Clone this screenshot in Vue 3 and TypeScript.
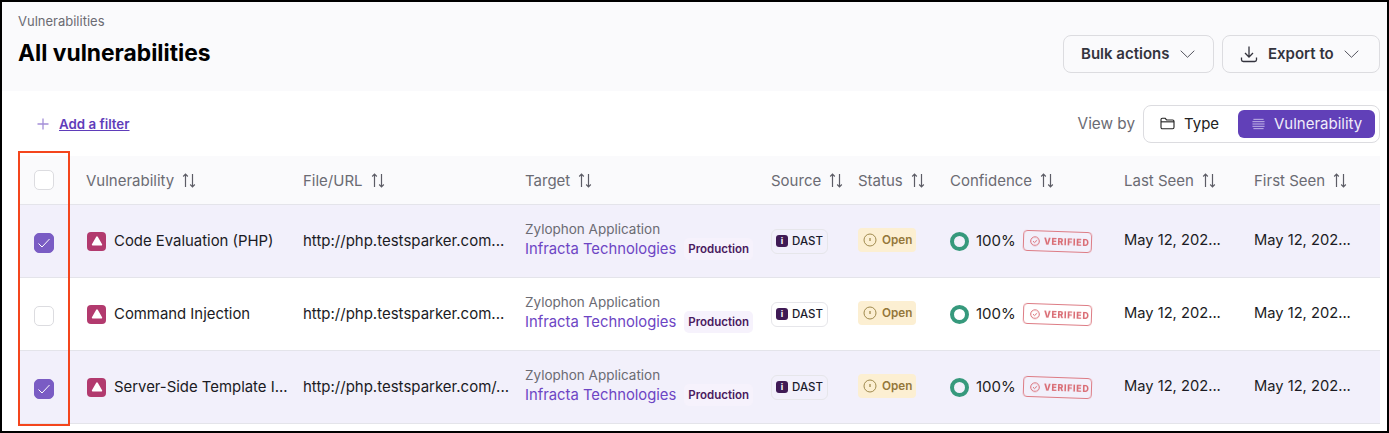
<script setup lang="ts">
interface Row { name: string; url: string; checked: boolean }
const rows: Row[] = [
  { name: 'Code Evaluation (PHP)', url: 'http://php.testsparker.com...', checked: true },
  { name: 'Command Injection', url: 'http://php.testsparker.com...', checked: false },
  { name: 'Server-Side Template I...', url: 'http://php.testsparker.com/...', checked: true },
]
const columns = ['Vulnerability', 'File/URL', 'Target', 'Source', 'Status', 'Confidence', 'Last Seen', 'First Seen']
</script>

<template>
  <div class="page">
    <svg class="defs" width="0" height="0" aria-hidden="true">
      <filter id="rough" x="-5%" y="-10%" width="110%" height="120%">
        <feTurbulence type="fractalNoise" baseFrequency="0.9" numOctaves="2" seed="4" result="n" />
        <feDisplacementMap in="SourceGraphic" in2="n" scale="1" />
      </filter>
    </svg>
    <header class="top">
      <div>
        <div class="crumb">Vulnerabilities</div>
        <h1 class="title">All vulnerabilities</h1>
      </div>
      <div class="actions">
        <button class="btn bulk">Bulk actions
          <svg viewBox="0 0 15 8" width="15" height="8"><path d="M.7.7l6.800 6.600L14.300.7" fill="none" stroke="#55555f" stroke-width="1"/></svg>
        </button>
        <button class="btn export">
          <svg viewBox="0 0 18 18" width="18" height="18" fill="none" stroke="#33333d" stroke-width="1.300"><path d="M9 1.500v10M5 8l4 4 4-4M1.500 12.500v2.200c0 1 .7 1.800 1.800 1.800h11.400c1.100 0 1.800-.8 1.800-1.800v-2.200"/></svg>
          <span>Export to</span>
          <svg viewBox="0 0 15 8" width="15" height="8"><path d="M.7.7l6.800 6.600L14.300.7" fill="none" stroke="#55555f" stroke-width="1"/></svg>
        </button>
      </div>
    </header>

    <div class="filters">
      <div class="filter">
        <svg viewBox="0 0 12 12" width="12" height="12"><path d="M6 .5v11M.5 6h11" stroke="#a48fd8" stroke-width="1.300"/></svg>
        <a class="add">Add a filter</a>
      </div>
      <div class="view">
        <span class="view-label">View by</span>
        <div class="seg">
          <span class="seg-item">
            <svg viewBox="0 0 16 14" width="15" height="13" fill="none" stroke="#222" stroke-width="1.200"><path d="M1 3c0-1 .6-1.600 1.500-1.600h3l1.500 1.800h6.500c.9 0 1.500.6 1.500 1.500V11c0 1-.6 1.600-1.500 1.600h-11C1.600 12.600 1 12 1 11z"/><path d="M1 5.200h14"/></svg>
            Type
          </span>
          <span class="seg-item active">
            <svg viewBox="0 0 14 12" width="13" height="12" stroke="#c9bdea" stroke-width="1"><path d="M1.500 1h11M.5 3.500h13M.5 6h13M.5 8.500h13M1.500 11h11"/></svg>
            Vulnerability
          </span>
        </div>
      </div>
    </div>

    <div class="table">
      <div class="row head">
        <div class="cell-check"><span class="box"></span></div>
        <div v-for="c in columns" :key="c" class="th">
          {{ c }}
          <svg viewBox="0 0 14 15" width="14" height="15" fill="none" stroke="#5c5c66" stroke-width="1.200"><path d="M3.500 14V1.200M1.200 3.500l2.300-2.300 2.300 2.300M10.500 1v12.800M8.200 11.500l2.300 2.300 2.300-2.300"/></svg>
        </div>
      </div>
      <div v-for="r in rows" :key="r.name" class="row" :class="{ selected: r.checked }">
        <div class="cell-check body">
          <span class="box" :class="{ on: r.checked }">
            <svg v-if="r.checked" viewBox="0 0 14 12" width="14" height="12"><path d="M1.500 6.500l3.500 3.500 7.500-8" fill="none" stroke="#fff" stroke-width="1"/></svg>
          </span>
        </div>
        <div class="td name">
          <span class="sev"><svg viewBox="0 0 12 10" width="12" height="10"><path d="M6 1.300L10.300 8.600H1.700z" fill="#fff" stroke="#fff" stroke-width="1.800" stroke-linejoin="round"/></svg></span>
          <span class="name-text">{{ r.name }}</span>
        </div>
        <div class="td"><span class="line">{{ r.url }}</span></div>
        <div class="td target">
          <div class="app">Zylophon Application</div>
          <div class="org"><span class="org-name">Infracta Technologies</span><span class="env">Production</span></div>
        </div>
        <div class="td"><span class="src"><span class="src-i">i</span>DAST</span></div>
        <div class="td status-cell"><span class="status">
          <svg viewBox="0 0 14 14" width="14" height="14" fill="none" stroke="#a08a4e" stroke-width="1"><circle cx="7" cy="7" r="6"/><path d="M7 5v3" stroke-width="1.300"/></svg>
          Open</span></div>
        <div class="td conf">
          <span class="ring"></span>
          <span class="pct">100%</span>
          <span class="stamp">
            <svg viewBox="0 0 10 10" width="10" height="10" fill="none" stroke="#d96a72" stroke-width="1"><circle cx="5" cy="5" r="4.300"/><path d="M3 5l1.500 1.500L7 3.800"/></svg>
            VERIFIED
          </span>
        </div>
        <div class="td"><span class="line date">May 12, 202...</span></div>
        <div class="td"><span class="line date">May 12, 202...</span></div>
      </div>
    </div>

    <div class="highlight"></div>
  </div>
</template>

<style>
html, body { margin: 0; background: #fff; }
</style>

<style scoped>
.page {
  position: relative;
  width: 1389px;
  height: 433px;
  box-sizing: border-box;
  border: 2px solid #000;
  overflow: hidden;
  background: #fff;
  font-family: Inter, "Noto Sans", sans-serif;
  color: #1b1b24;
}
.defs { position: absolute; }
.top {
  height: 89px;
  background: #fafafc;
  display: flex;
  justify-content: space-between;
  padding: 11px 7px 0 16px;
  box-sizing: border-box;
}
.crumb { font-size: 13px; line-height: 16px; color: #6b6b73; }
.title { margin: 10px 0 0; font-size: 22.8px; line-height: 28px; font-weight: 700; color: #000; }
.actions { display: flex; gap: 8px; padding-top: 22px; align-items: flex-start; }
.btn {
  height: 38px;
  box-sizing: border-box;
  border: 1px solid #dcdce0;
  border-radius: 8px;
  background: #fafafc;
  display: flex;
  align-items: center;
  font: 600 15px Inter, sans-serif;
  color: #33333d;
  padding: 0 0 2px;
}
.btn svg { flex: none; margin-top: 2px; }
.bulk { width: 151px; padding-left: 17px; gap: 11px; }
.export { width: 158px; padding-left: 17px; gap: 10px; }
.filters {
  height: 65px;
  padding: 0 7px 0 35px;
  display: flex;
  justify-content: space-between;
  align-items: flex-start;
}
.filter { display: flex; align-items: center; gap: 10px; padding-top: 25px; }
.add { font-size: 13.300px; line-height: 16px; font-weight: 600; color: #5f3dba; text-decoration: underline; }
.view { display: flex; align-items: center; gap: 8px; padding-top: 14px; }
.view-label { font-size: 15.300px; color: #6b6b73; margin-top: -2px; }
.seg {
  width: 237px;
  height: 38px;
  box-sizing: border-box;
  border: 1px solid #dcdce0;
  border-radius: 8px;
  padding: 4px;
  display: flex;
  justify-content: space-between;
}
.seg-item {
  display: flex;
  align-items: center;
  gap: 9px;
  font-size: 15px;
  padding-left: 12px;
  padding-bottom: 1px;
  color: #222;
}
.seg-item.active {
  width: 137px;
  box-sizing: border-box;
  padding-left: 14px;
  border-radius: 6px;
  background: #6140b8;
  color: #f0ecfa;
}
.table { margin: 0 7px 0 16px; }
.row {
  display: grid;
  grid-template-columns: 68px 217px 222px 246px 87px 92px 174px 130px 126px;
  height: 73px;
  box-sizing: border-box;
  border-bottom: 1px solid #e4e4ea;
  align-items: center;
}
.row.head { height: 49px; background: #fafafc; }
.row.selected { background: #f2f0fb; }
.cell-check { padding-left: 16px; display: flex; }
.cell-check.body { margin-top: 4px; }
.box {
  width: 20px;
  height: 20px;
  box-sizing: border-box;
  border: 1px solid #dcdce0;
  border-radius: 5px;
  background: #fff;
  display: flex;
  align-items: center;
  justify-content: center;
}
.box.on { background: #7a5cc4; border-color: #7a5cc4; }
.th { font-size: 15px; color: #6b6b73; display: flex; align-items: center; gap: 8px; white-space: nowrap; }
.td { font-size: 15px; min-width: 0; }
.line { display: block; white-space: nowrap; margin-top: -2px; }
.date { font-size: 14.700px; }
.name { display: flex; align-items: center; gap: 8px; padding-left: 1px; }
.name-text { display: block; white-space: nowrap; font-size: 14.900px; }
.sev {
  flex: none;
  width: 19px;
  height: 19px;
  border-radius: 4px;
  background: #b23a6e;
  display: flex;
  align-items: center;
  justify-content: center;
}
.target { padding-bottom: 2px; }
.app { font-size: 13.500px; line-height: 18px; color: #6b6b73; }
.org { display: flex; align-items: center; height: 22px; }
.org-name { font-size: 14.800px; color: #6d45c4; white-space: nowrap; }
.env {
  margin-left: 8px;
  padding: 3px 4px;
  border-radius: 5px;
  font-size: 11.500px;
  line-height: 16px;
  font-weight: 600;
  color: #4a1a60;
  background: #f6f2fc;
}
.src {
  display: inline-flex;
  align-items: center;
  gap: 4px;
  height: 25px;
  box-sizing: border-box;
  padding: 0 4px;
  border: 1px solid #e6e6ea;
  border-radius: 6px;
  font-size: 11.500px;
  font-weight: 500;
  color: #1b1b2c;
  background: #fff;
  vertical-align: middle;
}
.selected .src { background: #f2f0fb; }
.src-i {
  width: 12px;
  height: 12px;
  border-radius: 3px;
  background: #3f1a55;
  color: #fff;
  font-size: 9px;
  font-weight: 700;
  line-height: 12px;
  text-align: center;
}
.status-cell { margin-top: -2px; }
.status {
  display: inline-flex;
  align-items: center;
  gap: 5px;
  height: 24px;
  padding: 0 4px 0 5px;
  border-radius: 4px;
  background: #fcefd2;
  color: #94773a;
  font-size: 11.700px;
  font-weight: 600;
  vertical-align: middle;
}
.conf { display: flex; align-items: center; }
.ring {
  width: 19px;
  height: 19px;
  box-sizing: border-box;
  border: 4px solid #36997c;
  border-radius: 50%;
  flex: none;
}
.pct { margin-left: 7px; margin-top: -2px; font-size: 15px; color: #222; }
.stamp {
  margin-left: 7px;
  width: 69px;
  height: 21px;
  box-sizing: border-box;
  display: inline-flex;
  align-items: center;
  gap: 4px;
  padding-left: 6px;
  border: 1.500px solid #dd7c84;
  border-radius: 4px;
  transform: rotate(2deg);
  font-size: 8.800px;
  font-weight: 800;
  letter-spacing: .7px;
  color: #d96a72;
  filter: url(#rough);
}
.highlight {
  position: absolute;
  left: 16px;
  top: 149px;
  width: 52px;
  height: 275px;
  box-sizing: border-box;
  border: 2px solid #f4451c;
  pointer-events: none;
}
</style>
